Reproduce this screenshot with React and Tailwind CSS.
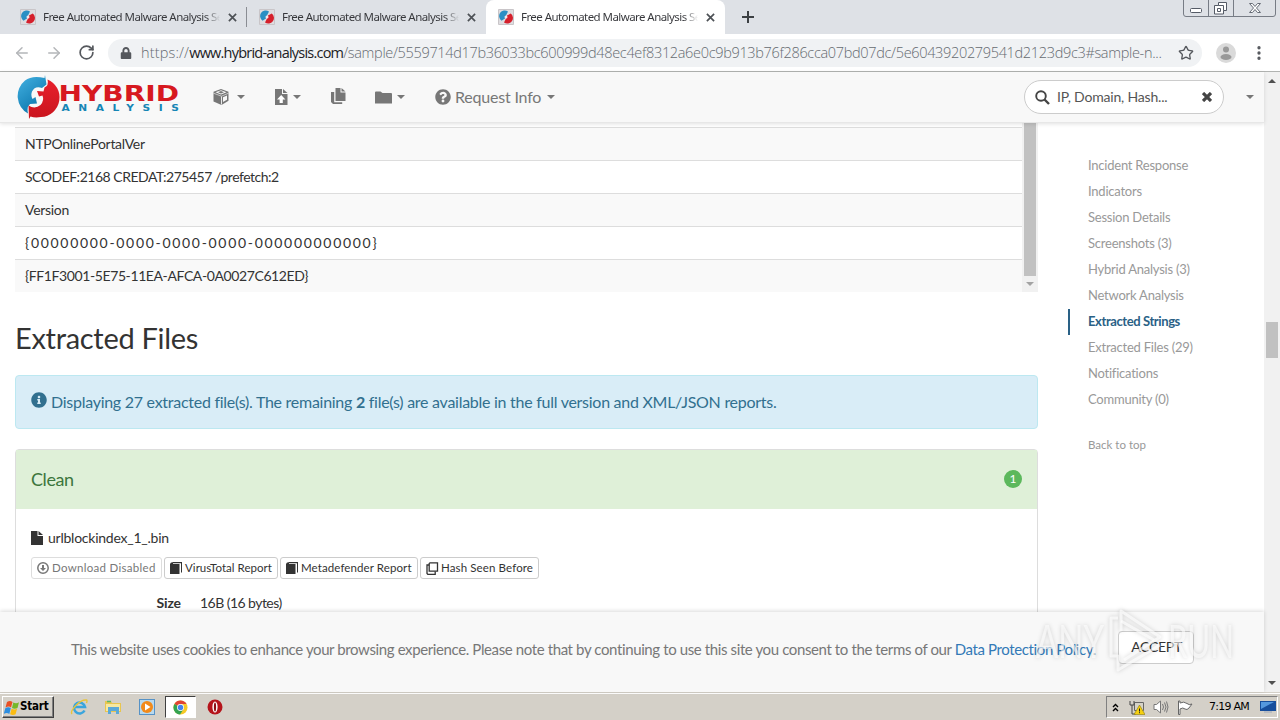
import { ArrowLeft, ArrowRight, RotateCw, Star, MoreVertical } from 'lucide-react'
import { FaLock, FaQuestionCircle, FaInfoCircle } from 'react-icons/fa'

const tabs = [
  { id: 1, active: false },
  { id: 2, active: false },
  { id: 3, active: true },
]

const strings = [
  { text: 'NTPOnlinePortalVer', className: 'tracking-[-0.3px]' },
  { text: 'SCODEF:2168 CREDAT:275457 /prefetch:2', className: 'tracking-[-0.48px]' },
  { text: 'Version', className: 'tracking-[-0.3px]' },
  { text: '{00000000-0000-0000-0000-000000000000}', className: 'tracking-[1.690px]' },
  { text: '{FF1F3001-5E75-11EA-AFCA-0A0027C612ED}', className: 'tracking-[-0.4px]' },
]

const sideNav = [
  'Incident Response',
  'Indicators',
  'Session Details',
  'Screenshots (3)',
  'Hybrid Analysis (3)',
  'Network Analysis',
  'Extracted Strings',
  'Extracted Files (29)',
  'Notifications',
  'Community (0)',
]

function Favicon() {
  return (
    <svg viewBox="0 0 16 16" className="h-4 w-4 shrink-0">
      <rect width="16" height="16" rx="1" fill="#c9c5c8" />
      <rect x="1" y="1" width="14" height="14" fill="#dedde0" />
      <path d="M10 2.500a5.600 5.600 0 0 0-6.500 9.200L7 9.500l1-3z" fill="#2a8fc4" />
      <path d="M6 13.500a5.600 5.600 0 0 0 6.700-9L9 6.500 8 9.500z" fill="#d5202c" />
      <circle cx="8" cy="8" r="1.500" fill="#f2e6ea" />
    </svg>
  )
}

function CloseIcon() {
  return (
    <svg viewBox="0 0 10 10" className="h-[9px] w-[9px] shrink-0" stroke="#4d5156" strokeWidth="1.900">
      <path d="M1 1l8 8M9 1L1 9" />
    </svg>
  )
}

function Tab({ active }) {
  return (
    <div className={active ? 'flex h-full w-[239px] items-center rounded-t-lg bg-white pl-3' : 'flex h-full w-[239px] items-center pl-3'}>
      <Favicon />
      <div className="ml-[7px] w-[177px] whitespace-nowrap bg-gradient-to-r from-[#35363a] from-92% to-transparent bg-clip-text font-['Noto_Sans',sans-serif] text-[11.500px] tracking-[-0.560px] text-transparent">
        Free Automated Malware Analysis Se
      </div>
      <span className="ml-2">
        <CloseIcon />
      </span>
    </div>
  )
}

function WindowButtons() {
  return (
    <svg viewBox="0 0 94 18" className="h-[18px] w-[94px]" fill="none" stroke="#777c85">
      <path d="M.5 0v14q0 2.500 2.500 2.500h87q2.500 0 2.500-2.500V0M25.500 0v16.500M50.500 0v16.500" />
      <rect x="7.500" y="8.500" width="11" height="4" rx="1" fill="#fff" stroke="#555b66" />
      <path d="M35.500 2.500h8v8h-3v3.500h-9V5.500h4z" fill="#fff" stroke="#555b66" />
      <path d="M35.500 5.500h5v5M34.500 8.500h3v3h-3z" stroke="#555b66" />
      <path d="M66.500 3.500h3l2.500 3 2.500-3h3l-4 4.500 4 4.500h-3l-2.500-3-2.500 3h-3l4-4.500z" fill="#fff" stroke="#666c76" />
    </svg>
  )
}

function BrowserChrome() {
  return (
    <div className="shrink-0">
      <div className="flex h-[34px] justify-between bg-[#dee1e6]">
        <div className="flex items-center pl-2">
          {tabs.map((tab) => (
            <div key={tab.id} className="flex h-full items-center">
              <Tab active={tab.active} />
              {tab.id === 1 && <div className="-ml-px h-5 w-px bg-[#8a8d93]" />}
            </div>
          ))}
          <svg viewBox="0 0 12 12" className="ml-[17px] h-3 w-3" stroke="#3c4043" strokeWidth="2">
            <path d="M6 0v12M0 6h12" />
          </svg>
        </div>
        <div className="mr-[3px]">
          <WindowButtons />
        </div>
      </div>

      <div className="flex h-[38px] items-center border-b border-[#b1b3b1] bg-white pl-[13px]">
        <ArrowLeft size={18} strokeWidth={2} color="#b4b6b9" />
        <ArrowRight size={18} strokeWidth={2} color="#b4b6b9" className="ml-[14px]" />
        <RotateCw size={17} strokeWidth={2.4} color="#55585d" className="ml-[15px]" />
        <div className="ml-[13px] flex h-7 w-[1094px] shrink-0 items-center rounded-full bg-[#f0f2f4] pl-3">
          <FaLock size={12} color="#55585d" className="shrink-0" />
          <div className="ml-[9px] w-[1034px] shrink-0 whitespace-nowrap font-['Open_Sans',sans-serif] text-[14.500px] font-light tracking-[-0.33px] text-[#666b71]">
            <span className="tracking-[0.150px]">https://</span>
            <span className="font-normal tracking-[-0.780px] text-[#202124]">www.hybrid-analysis.com</span>
            /sample/5559714d17b36033bc600999d48ec4ef8312a6e0c9b913b76f286cca07bd07dc/5e6043920279541d2123d9c3#sample-n...
          </div>
          <Star size={16} strokeWidth={2} color="#55585d" className="ml-[3px] shrink-0" />
        </div>
        <svg viewBox="0 0 20 20" className="ml-[14px] h-5 w-5">
          <circle cx="10" cy="10" r="10" fill="#dadada" />
          <circle cx="10" cy="6.500" r="3" fill="#999" />
          <ellipse cx="10" cy="14" rx="5.500" ry="3" fill="#999" />
        </svg>
        <MoreVertical size={18} strokeWidth={2.4} color="#55585d" className="ml-[14px]" />
      </div>
    </div>
  )
}

function Logo() {
  return (
    <svg viewBox="0 0 166 46" className="h-[46px] w-[166px]">
      <defs>
        <linearGradient id="swirl" x1="0" y1="0" x2="0.6" y2="1">
          <stop offset="0" stopColor="#45b3e3" />
          <stop offset="1" stopColor="#0b76ad" />
        </linearGradient>
        <linearGradient id="swirlRed" x1="0" y1="0" x2="0" y2="1">
          <stop offset="0" stopColor="#e8202c" />
          <stop offset="1" stopColor="#c9151e" />
        </linearGradient>
      </defs>
      <path d="M30 1l1.500 9.500L27 14q-7-2.500-10 3.500-1.500 4 .5 7.500l3-2 1.500 6.500-7 .5q-3.500 3-2 9.500A20 20 0 0 1 10 6.500Q17 1 29.500 4z" fill="url(#swirl)" />
      <path d="M32.500 5.500A19.500 19.500 0 0 1 26 43q-6 1-10.500-.5L14 45l-.5-13.500q6.500 4 12-.5 4-4.500 2-9.500l-3.500 1-2-5.500 6.500.5 1-4q4.500-2 3-8z" fill="url(#swirlRed)" />
      <text transform="translate(43.500 27) scale(1.340 1)" className="font-['DejaVu_Sans',sans-serif] text-[20.500px] font-bold" fill="#d71920" textLength="90" lengthAdjust="spacingAndGlyphs">
        HYBRID
      </text>
      <text transform="translate(46.500 36.500) scale(1.250 1)" className="font-['DejaVu_Sans',sans-serif] text-[8.500px] font-bold" fill="#1686b5" textLength="94">
        ANALYSIS
      </text>
    </svg>
  )
}

function Caret() {
  return <span className="h-0 w-0 border-x-4 border-t-4 border-x-transparent border-t-[#777]" />
}

function CubeIcon() {
  return (
    <svg viewBox="0 0 16 16" className="h-4 w-4">
      <path d="M8 0l7.500 2.800v9L8.500 16 .5 12.500v-9.700z" fill="#777" />
      <path d="M2.500 3.300L8 1.300l5.500 2L8 5.500z" fill="#f8f8f8" />
      <path d="M5 3.300l3-1.200 3 1.200-3 1.200z" fill="#777" />
      <path d="M8.500 7.500v8" stroke="#f8f8f8" strokeWidth=".9" />
      <path d="M10 8.300l4-1.800v4.200l-4 2.300z" fill="#f8f8f8" />
      <path d="M.5 4.200l8 3 7-3" fill="none" stroke="#f8f8f8" strokeWidth=".6" />
    </svg>
  )
}

function FileUpIcon() {
  return (
    <svg viewBox="0 0 13 16" className="h-4 w-[13px]">
      <path d="M0 0h7v5h5.500v11H0z" fill="#777" />
      <path d="M8 0l4.500 4H8z" fill="#777" />
      <path d="M6.200 6L2 10.500h2.600v3.500h3.200v-3.500h2.600z" fill="#fff" />
    </svg>
  )
}

function DuplicateIcon() {
  return (
    <svg viewBox="0 0 15 16" className="h-4 w-[15px]" fill="#777">
      <path d="M4.500 0h5v4.500h5V13h-10z" />
      <path d="M10.500 0l4 3.500h-4zM0 4h3.200v10.200h8V16H2L0 14z" />
    </svg>
  )
}

function FolderCloseIcon() {
  return (
    <svg viewBox="0 0 17 13" className="h-[13px] w-[17px]" fill="#777">
      <path d="M0 1.500Q0 .5 1 .5h4.500L7.500 2H16q1 0 1 1v9.500H0z" />
    </svg>
  )
}

function SiteHeader() {
  return (
    <header className="z-10 flex h-[51px] shrink-0 items-center border-b border-[#e7e7e7] bg-[#f8f8f8] pl-[15px] shadow-[0_1px_4px_rgba(0,0,0,0.12)]">
      <Logo />
      <div className="ml-8 flex items-center gap-2 pb-px">
        <CubeIcon />
        <Caret />
      </div>
      <div className="ml-[30px] flex items-center gap-[5px] pb-px">
        <FileUpIcon />
        <Caret />
      </div>
      <div className="ml-[30px] pb-[2px]">
        <DuplicateIcon />
      </div>
      <div className="ml-[29px] flex items-center gap-[5px]">
        <FolderCloseIcon />
        <Caret />
      </div>
      <div className="ml-[30px] flex items-center pb-px text-base text-[#777]">
        <FaQuestionCircle size={16} />
        <span className="ml-1 mr-[6px] tracking-[-0.2px]">Request Info</span>
        <Caret />
      </div>
      <div className="ml-auto mr-[10px] flex items-center">
        <div className="flex h-[34px] w-[200px] items-center rounded-full border border-[#ccc] bg-white pl-[10px] pr-[11px]">
          <svg viewBox="0 0 15 15" className="h-[15px] w-[15px]" fill="none" stroke="#444">
            <circle cx="6" cy="6" r="4.800" strokeWidth="1.900" />
            <path d="M9.500 9.500l4.500 4.500" strokeWidth="2.400" />
          </svg>
          <span className="ml-[7px] flex-1 text-sm tracking-[-0.18px] text-[#555]">IP, Domain, Hash...</span>
          <svg viewBox="0 0 10 10" className="h-[10px] w-[10px]" stroke="#444" strokeWidth="3.200">
            <path d="M1 1l8 8M9 1L1 9" />
          </svg>
        </div>
        <span className="ml-[22px] flex">
          <Caret />
        </span>
      </div>
    </header>
  )
}

function StringsTable() {
  return (
    <div className="flex w-[1023px] pt-1">
      <div className="flex-1">
        {strings.map((row) => (
          <div key={row.text} className="flex h-[33px] items-center border-t border-[#ddd] pl-[10px] text-sm odd:bg-[#f9f9f9]">
            <span className={row.className}>{row.text}</span>
          </div>
        ))}
      </div>
      <div className="-mt-1 flex w-4 flex-col items-center bg-[#f1f1f1]">
        <div className="w-3 flex-1 bg-[#c1c1c1]" />
        <div className="flex h-4 items-center">
          <span className="h-0 w-0 border-x-4 border-t-4 border-x-transparent border-t-[#a3a3a3]" />
        </div>
      </div>
    </div>
  )
}

function BookIcon() {
  return (
    <svg viewBox="0 0 12 12" className="h-3 w-3" fill="#333">
      <path d="M2.500 0H12v10.500h-1V1.200H2.500zM0 2h9.500v10H0z" />
      <path d="M1 .5h2V2H0z" />
    </svg>
  )
}

function DownloadIcon() {
  return (
    <svg viewBox="0 0 12 12" className="h-3 w-3" fill="none" stroke="#777" strokeWidth="1.500">
      <circle cx="6" cy="6" r="5.200" />
      <path d="M5 3h2v3h2L6 9 3 6h2z" fill="#777" stroke="none" />
    </svg>
  )
}

function CopyIcon() {
  return (
    <svg viewBox="0 0 13 13" className="h-[13px] w-[13px]" fill="none" stroke="#333" strokeWidth="1.300">
      <path d="M4 .8h7.500v8.400H3.200V1.600z" />
      <path d="M3.200 3H1v8.500l.8.800h7.400V9.500" />
    </svg>
  )
}

const fileActions = [
  { label: 'Download Disabled', icon: DownloadIcon, className: 'w-[131px] gap-[3px] border-[#ddd] text-[#777] tracking-[0.300px]' },
  { label: 'VirusTotal Report', icon: BookIcon, className: 'w-[114px] gap-[3px] border-[#ccc] tracking-[0.040px]' },
  { label: 'Metadefender Report', icon: BookIcon, className: 'w-[138px] gap-[3px] border-[#ccc] tracking-[0.100px]' },
  { label: 'Hash Seen Before', icon: CopyIcon, className: 'w-[119px] gap-[2px] border-[#ccc] tracking-[0.120px]' },
]

function CleanPanel() {
  return (
    <section className="mt-5 h-[260px] w-[1023px] rounded border border-[#ddd]">
      <div className="flex h-[59px] items-center justify-between bg-[#dff0d8] px-[15px] pb-[2px]">
        <h3 className="text-lg tracking-[-0.4px] text-[#3c763d]">Clean</h3>
        <span className="grid h-[18px] w-[18px] place-items-center rounded-full bg-[#5cb85c] text-xs text-white">1</span>
      </div>
      <div className="px-[15px] pt-[18px]">
        <div className="flex h-[21px] items-center text-sm">
          <svg viewBox="0 0 12 14" className="h-[14px] w-3" fill="#333">
            <path d="M0 0h6.500v5H12v9H0z" />
            <path d="M7.500 0L12 4H7.500z" />
          </svg>
          <span className="ml-[5px] tracking-[-0.240px]">urlblockindex_1_.bin</span>
        </div>
        <div className="mt-[9px] flex gap-[2px]">
          {fileActions.map(({ label, icon: Icon, className }) => (
            <button key={label} type="button" className={`flex h-[22px] shrink-0 items-center whitespace-nowrap rounded-[3px] border bg-white pl-[5px] text-[11.500px] ${className}`}>
              <Icon />
              {label}
            </button>
          ))}
        </div>
        <div className="mt-[14px] flex gap-[19px] text-sm">
          <span className="w-[150px] text-right font-bold tracking-[-0.1px]">Size</span>
          <span className="tracking-[-0.540px]">16B (16 bytes)</span>
        </div>
      </div>
    </section>
  )
}

function SideNav() {
  return (
    <nav className="ml-[30px] pt-[30px] text-[13px] text-[#999]">
      {sideNav.map((item) => (
        <div
          key={item}
          className={
            item === 'Extracted Strings'
              ? 'flex h-[26px] items-center border-l-2 border-[#2a6186] pl-[18px] font-bold tracking-[-0.400px] text-[#2a6186]'
              : 'flex h-[26px] items-center pl-5 tracking-[-0.230px]'
          }
        >
          {item}
        </div>
      ))}
      <div className="mt-[23px] pl-5 text-[11.500px]">Back to top</div>
    </nav>
  )
}

function CookieBar() {
  return (
    <div className="z-10 flex h-20 shrink-0 items-center bg-[#f8f8f8] pl-[71px] shadow-[0_-1px_4px_rgba(0,0,0,0.15)]">
      <p className="w-[1029px] whitespace-nowrap pb-[6px] text-[15px] tracking-[-0.385px] text-[#777]">
        This website uses cookies to enhance your browsing experience. Please note that by continuing to use this site you consent to the terms of our{' '}
        <span className="text-[#337ab7]">Data Protection Policy</span>.
      </p>
      <button type="button" className="mb-[10px] ml-[18px] h-[33px] w-[76px] rounded border border-[#ccc] bg-white pl-px text-sm tracking-[-0.3px]">
        ACCEPT
      </button>
    </div>
  )
}

function Watermark() {
  return (
    <svg viewBox="0 0 210 70" className="pointer-events-none absolute left-[1030px] top-[605px] z-20 h-[70px] w-[210px] drop-shadow-[0_0_2px_rgba(0,0,0,0.25)]">
      <g className="font-['Lato',sans-serif] text-[46px]" fill="#fff" fillOpacity="0.6">
        <text x="6" y="53" textLength="68" lengthAdjust="spacingAndGlyphs">ANY</text>
        <text x="138" y="53" textLength="66" lengthAdjust="spacingAndGlyphs">RUN</text>
      </g>
      <g fill="none" stroke="#fff" strokeOpacity="0.65" strokeWidth="3" strokeLinejoin="round">
        <path d="M91 26V6l39 26-36 23" />
        <path d="M91 16l33 19" />
        <path d="M88 13h-7v38h7v14l42-25" />
      </g>
    </svg>
  )
}

function PageScrollbar() {
  return (
    <div className="flex w-4 shrink-0 flex-col items-center bg-[#f1f1f1]">
      <span className="mt-[7px] h-0 w-0 border-x-4 border-b-4 border-x-transparent border-b-[#505050]" />
      <div className="mt-[239px] h-9 w-3 bg-[#c1c1c1]" />
      <span className="mb-[7px] mt-auto h-0 w-0 border-x-4 border-t-4 border-x-transparent border-t-[#505050]" />
    </div>
  )
}

function WindowsFlag() {
  return (
    <svg viewBox="0 0 16 15" className="h-[15px] w-4 shrink-0">
      <path d="M3 2q3-2 5.500 0L7 7.500Q5 5.500 1.500 7.500z" fill="#e95024" />
      <path d="M9.300 2.500q3 1.500 5.700-.3L13.500 8q-3 1.500-5.500 0z" fill="#76b82a" />
      <path d="M1.300 8.200q3-2 5.500 0L5.300 14Q3 12-.2 13.800z" fill="#2d8ee0" />
      <path d="M7.600 8.700q3 1.500 5.500-.2l-1.500 5.700q-2.500 1.500-5.500 0z" fill="#fbbc12" />
    </svg>
  )
}

function IeIcon() {
  return (
    <svg viewBox="0 0 18 18" className="h-[18px] w-[18px]" fill="none">
      <path d="M14.500 12.500A5.500 5.500 0 1 1 15 9H4.500" stroke="#3aa5dd" strokeWidth="2.600" />
      <path d="M2 16C-.5 13 10 1 16.500 2q1 .5 0 3" stroke="#e9c43a" strokeWidth="1.400" />
    </svg>
  )
}

function FolderIcon() {
  return (
    <svg viewBox="0 0 18 18" className="h-[18px] w-[18px]">
      <path d="M1 3h6l1 2h9v9H1z" fill="#e8c54f" />
      <path d="M2 6h14v7H2z" fill="#f6e8a0" />
      <path d="M4 16V9h11v7h-3v-3H7v3z" fill="#5ba9d8" />
      <path d="M3 3.500h4" stroke="#5ab765" strokeWidth="1.500" />
    </svg>
  )
}

function PlayerIcon() {
  return (
    <svg viewBox="0 0 16 16" className="h-4 w-4">
      <rect x=".5" y=".5" width="15" height="15" fill="#b8d9ee" stroke="#5692c6" />
      <circle cx="8" cy="8" r="6" fill="#f28a1a" />
      <path d="M6 4.500l5.500 3.500L6 11.500z" fill="#fff" />
    </svg>
  )
}

function ChromeIcon() {
  return (
    <svg viewBox="0 0 16 16" className="h-[15px] w-[15px]">
      <circle cx="8" cy="8" r="7.500" fill="#f6c927" />
      <path d="M8 8L1.500 4.200A7.500 7.500 0 0 1 14.500 4.300H8z" fill="#e04434" />
      <path d="M8 8L1.500 4.200A7.500 7.500 0 0 0 7.500 15.500L11 10z" fill="#33a351" />
      <circle cx="8" cy="8" r="3.700" fill="#fff" />
      <circle cx="8" cy="8" r="2.900" fill="#4483ed" />
    </svg>
  )
}

function OperaIcon() {
  return (
    <svg viewBox="0 0 16 16" className="h-4 w-4">
      <circle cx="8" cy="8" r="7.500" fill="#b5141b" />
      <ellipse cx="8" cy="8" rx="2.600" ry="5.500" fill="#fff" />
      <ellipse cx="8" cy="8" rx="1.100" ry="4.500" fill="#8d0e13" />
    </svg>
  )
}

function Tray() {
  return (
    <div className="ml-auto mr-[2px] flex h-[22px] w-[172px] items-center border border-b-white border-l-[#808080] border-r-white border-t-[#808080] pl-[5px]">
      <svg viewBox="0 0 7 9" className="h-[9px] w-[7px]" fill="none" stroke="#000" strokeWidth="1.400">
        <path d="M1 4l2.500-2.500L6 4M1 8l2.500-2.500L6 8" />
      </svg>
      <svg viewBox="0 0 16 15" className="ml-[10px] h-[15px] w-4">
        <path d="M5.500 2.500h9v8h-9z" fill="#d6d3c8" stroke="#666" />
        <path d="M1 1v4h4V1M3 5v9h4" fill="none" stroke="#444" />
        <path d="M10.500 5L16 14.500H5z" fill="#f5cf10" stroke="#8c7a10" strokeWidth=".6" />
        <path d="M10.500 8.500v3M10.500 12.200v1" stroke="#222" />
      </svg>
      <svg viewBox="0 0 16 16" className="ml-2 h-4 w-4" fill="none" stroke="#777">
        <path d="M1 5.500h2.500L7.500 2v12l-4-3.500H1z" fill="#fff" />
        <path d="M9.500 5q2 3 0 6M11.500 3.500q3 4.500 0 9M13.500 2.500q3 5.500 0 11" />
      </svg>
      <svg viewBox="0 0 16 15" className="ml-2 h-[15px] w-4" fill="#fff" stroke="#666">
        <path d="M1.500 1v13.500h1.500V9q3-2 5 0 2 1.500 4-1l3-4q-3 1.500-5-.5-3-2.500-7-.5V1z" />
      </svg>
      <span className="ml-4 whitespace-nowrap font-['DejaVu_Sans',sans-serif] text-[11px] tracking-[-0.75px] text-black">7:19 AM</span>
      <svg viewBox="0 0 16 14" className="ml-auto mr-px h-[14px] w-4">
        <rect y="1" width="16" height="10" fill="#174e9c" />
        <path d="M1 2h13L1 9z" fill="#5598de" />
        <path d="M4 11h8v2H4z" fill="#b9bcc1" />
      </svg>
    </div>
  )
}

function Taskbar() {
  return (
    <div className="flex h-7 shrink-0 items-center border-t border-[#d4d0c8] bg-[#d4d0c8] pt-px shadow-[inset_0_1px_0_#fff]">
      <button type="button" className="ml-[2px] flex h-[22px] w-[52px] items-center border border-b-[#404040] border-l-white border-r-[#404040] border-t-white pl-px shadow-[inset_-1px_-1px_0_#808080]">
        <WindowsFlag />
        <span className="font-['DejaVu_Sans_Condensed','DejaVu_Sans',sans-serif] text-[11.500px] font-bold tracking-[-0.2px] text-black">Start</span>
      </button>
      <div className="ml-4 flex items-center">
        <IeIcon />
        <span className="ml-4"><FolderIcon /></span>
        <span className="ml-[17px]"><PlayerIcon /></span>
        <span className="ml-[10px] grid h-[22px] w-[31px] place-items-center border border-b-white border-l-[#404040] border-r-white border-t-[#404040] bg-white">
          <ChromeIcon />
        </span>
        <span className="ml-[11px]"><OperaIcon /></span>
      </div>
      <Tray />
    </div>
  )
}

export default function App() {
  return (
    <div className="relative flex h-[720px] w-[1280px] flex-col overflow-hidden bg-white font-['Lato',sans-serif] text-[#333]">
      <BrowserChrome />
      <div className="flex min-h-0 flex-1">
        <div className="flex min-w-0 flex-1 flex-col">
          <SiteHeader />
          <div className="flex min-h-0 flex-1 overflow-hidden pl-[15px]">
            <main className="w-[1023px] shrink-0">
              <StringsTable />
              <h2 className="mt-7 text-[29px] leading-[36px] tracking-[-0.3px]">Extracted Files</h2>
              <div className="mt-[19px] flex h-[54px] items-center rounded border border-[#bce8f1] bg-[#d9edf7] pb-px pl-[15px] text-base text-[#31708f]">
                <FaInfoCircle size={16} className="mb-[3px]" />
                <span className="ml-1 tracking-[-0.270px]">
                  Displaying 27 extracted file(s). The remaining <b>2</b> file(s) are available in the full version and XML/JSON reports.
                </span>
              </div>
              <CleanPanel />
            </main>
            <SideNav />
          </div>
          <CookieBar />
        </div>
        <PageScrollbar />
      </div>
      <Taskbar />
      <Watermark />
    </div>
  )
}
